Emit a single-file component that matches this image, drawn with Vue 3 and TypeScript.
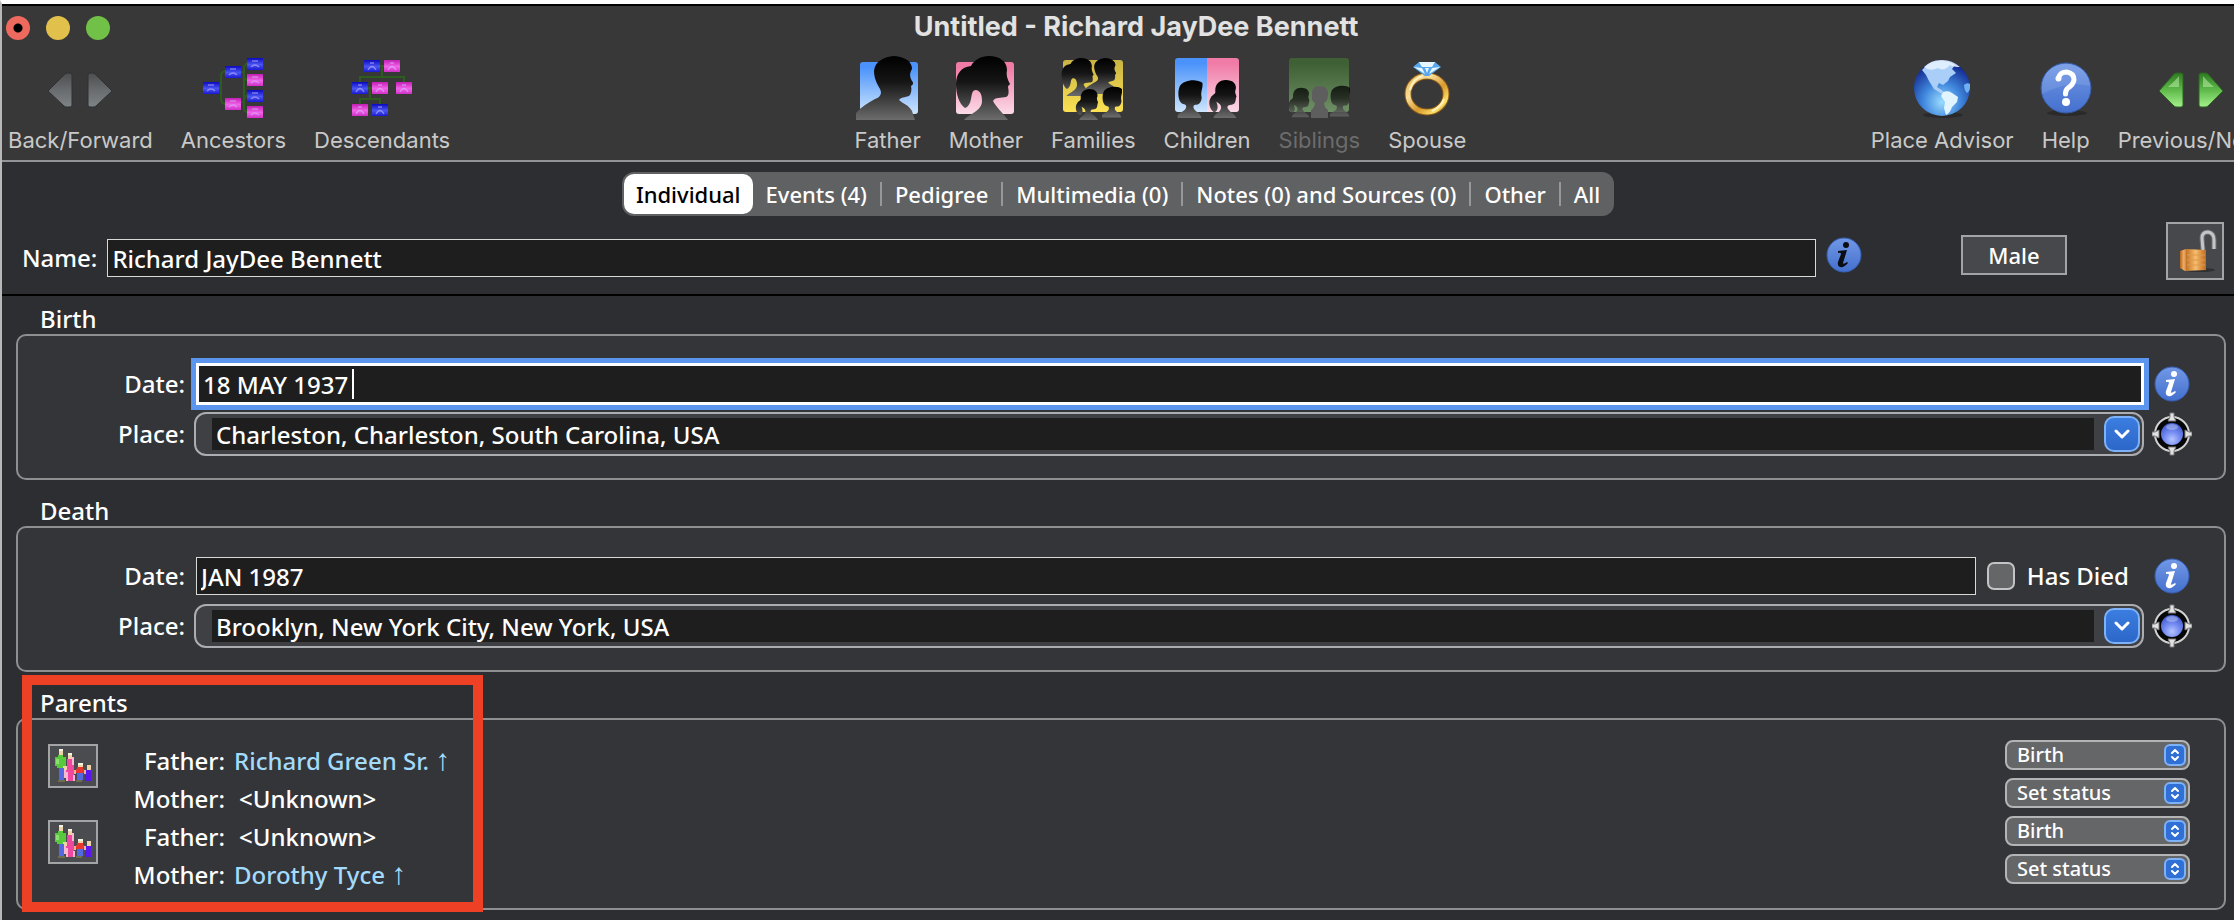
<script setup lang="ts">
import { ref } from 'vue'

interface Tool { id: string; label: string; disabled?: boolean }
interface Person { role: string; name: string; known: boolean; status: string }

const leftTools: Tool[] = [
  { id: 'history', label: 'Back/Forward' },
  { id: 'ancestors', label: 'Ancestors' },
  { id: 'descendants', label: 'Descendants' },
]
const familyTools: Tool[] = [
  { id: 'father', label: 'Father' },
  { id: 'mother', label: 'Mother' },
  { id: 'families', label: 'Families' },
  { id: 'children', label: 'Children' },
  { id: 'siblings', label: 'Siblings', disabled: true },
  { id: 'spouse', label: 'Spouse' },
]
const rightTools: Tool[] = [
  { id: 'globe', label: 'Place Advisor' },
  { id: 'help', label: 'Help' },
  { id: 'browse', label: 'Previous/Next' },
]
const groups = [leftTools, familyTools, rightTools]

const tabs = ['Individual', 'Events (4)', 'Pedigree', 'Multimedia (0)', 'Notes (0) and Sources (0)', 'Other', 'All']
const activeTab = ref('Individual')

const fullName = ref('Richard JayDee Bennett')
const hasDied = ref(false)
const events = ref([
  { id: 'birth', title: 'Birth', date: '18 MAY 1937', place: 'Charleston, Charleston, South Carolina, USA', focused: true },
  { id: 'death', title: 'Death', date: 'JAN 1987', place: 'Brooklyn, New York City, New York, USA', focused: false },
])
const families = ref<Person[][]>([
  [
    { role: 'Father', name: 'Richard Green Sr.', known: true, status: 'Birth' },
    { role: 'Mother', name: '<Unknown>', known: false, status: 'Set status' },
  ],
  [
    { role: 'Father', name: '<Unknown>', known: false, status: 'Birth' },
    { role: 'Mother', name: 'Dorothy Tyce', known: true, status: 'Set status' },
  ],
])

const ancestorNodes = [
  [0, 26, 'b'], [22, 10, 'b'], [22, 42, 'p'], [44, 2, 'b'], [44, 18, 'p'], [44, 34, 'b'], [44, 50, 'p'],
] as const
const descendantNodes = [
  [12, 4, 'b'], [32, 4, 'p'], [0, 26, 'b'], [20, 26, 'p'], [44, 26, 'p'], [0, 48, 'p'], [20, 48, 'b'],
] as const
</script>

<template>
  <div class="window">
    <svg class="sprite" aria-hidden="true">
      <defs>
        <linearGradient id="g-sil" x1="0" y1="0" x2="0" y2="1"><stop offset="0" stop-color="#000" /><stop offset="0.4" stop-color="#151515" /><stop offset="1" stop-color="#6c6c6c" /></linearGradient>
        <linearGradient id="g-sky" x1="0" y1="0" x2="0" y2="1"><stop offset="0.1" stop-color="#4b93fb" /><stop offset="1" stop-color="#cde5fd" /></linearGradient>
        <linearGradient id="g-rose" x1="0" y1="0" x2="0" y2="1"><stop offset="0.1" stop-color="#f07ba6" /><stop offset="1" stop-color="#fbdbe8" /></linearGradient>
        <linearGradient id="g-gold" x1="0" y1="0" x2="0" y2="1"><stop offset="0" stop-color="#c9b443" /><stop offset="1" stop-color="#fbe152" /></linearGradient>
        <linearGradient id="g-leaf" x1="0" y1="0" x2="0" y2="1"><stop offset="0.1" stop-color="#3f6034" /><stop offset="1" stop-color="#6f8f66" /></linearGradient>
        <linearGradient id="g-blue" x1="0" y1="0" x2="0" y2="1"><stop offset="0" stop-color="#0a0ac0" /><stop offset="0.55" stop-color="#4a55f2" /><stop offset="1" stop-color="#1a1ad2" /></linearGradient>
        <linearGradient id="g-pink" x1="0" y1="0" x2="0" y2="1"><stop offset="0" stop-color="#c41fb4" /><stop offset="0.55" stop-color="#f263ea" /><stop offset="1" stop-color="#cf2fc4" /></linearGradient>
        <linearGradient id="g-grey" x1="0" y1="0" x2="0" y2="1"><stop offset="0" stop-color="#4c4e50" /><stop offset="0.5" stop-color="#696c6f" /><stop offset="1" stop-color="#7e8386" /></linearGradient>
        <linearGradient id="g-green" x1="0" y1="0" x2="0" y2="1"><stop offset="0" stop-color="#2f7a22" /><stop offset="0.5" stop-color="#5fba4a" /><stop offset="1" stop-color="#a5f08c" /></linearGradient>
        <linearGradient id="g-info" x1="0" y1="0" x2="0" y2="1"><stop offset="0" stop-color="#7298e6" /><stop offset="1" stop-color="#4470cd" /></linearGradient>
        <radialGradient id="g-globe" cx="0.5" cy="0.75" r="0.75"><stop offset="0" stop-color="#9adcff" /><stop offset="0.45" stop-color="#3f86dc" /><stop offset="1" stop-color="#0c1c86" /></radialGradient>
        <radialGradient id="g-orb" cx="0.5" cy="0.75" r="0.75"><stop offset="0" stop-color="#b6c4ff" /><stop offset="0.5" stop-color="#7088f0" /><stop offset="1" stop-color="#3f58c8" /></radialGradient>
        <linearGradient id="g-ring" x1="0" y1="0" x2="1" y2="1"><stop offset="0" stop-color="#e8b95a" /><stop offset="0.3" stop-color="#f8dd98" /><stop offset="0.6" stop-color="#d89a2c" /><stop offset="0.85" stop-color="#fbe06a" /><stop offset="1" stop-color="#a86a18" /></linearGradient>
        <linearGradient id="g-lock" x1="0" y1="0" x2="1" y2="0"><stop offset="0" stop-color="#b5651c" /><stop offset="0.15" stop-color="#f0b06a" /><stop offset="0.25" stop-color="#c4762a" /><stop offset="0.6" stop-color="#f7bd6c" /><stop offset="1" stop-color="#c06a1e" /></linearGradient>
        <symbol id="man" viewBox="0 0 64 64">
          <path fill="url(#g-sil)" d="M0 64V57C5 51 12 47 19 43C25 41 26 37 24 33C21 28 18 22 18 15C19 5 28 1 38 0C50 1 56 6 56 13C53 18 54 21 56 25C58 27 57 29 55 30C56 34 55 37 54 39C51 42 46 40 43 44C47 48 52 48 56 55L59 64Z" />
        </symbol>
        <symbol id="woman" viewBox="0 0 64 64">
          <path fill="url(#g-sil)" d="M9 64C14 58 27 55 27 45C27 40 26 35 21 34C17 34 17 38 16 43C15 48 13 51 10 52C4 48 1 38 1 28C1 18 6 11 16 10C19 4 26 0 34 0C44 0 52 5 52 14C51 18 52 23 55 28C55 29 53 29 53 31C54 36 54 40 51 41C46 42 40 41 38 45C41 51 48 57 53 64Z" />
        </symbol>
        <symbol id="boy" viewBox="0 0 26 40">
          <path fill="url(#g-sil)" d="M0 40V37C3 33 9 33 9 28C9 26 8 26 5 25C0 22 0 12 2 7C5 0 20-2 26 3C27 8 24 12 25 17C26 20 24 26 20 26C17 26 16 27 17 30C19 34 24 34 25 40Z" />
        </symbol>
        <symbol id="girl" viewBox="0 0 30 40">
          <path fill="url(#g-sil)" d="M5 40C6 35 13 34 13 29C13 26 11 25 8 23C10 28 10 32 6 34C1 32-1 23 2 19C3 16 6 16 7 13C6 6 10 0 18 0C27 0 30 6 28 11C27 14 30 17 29 18C28 20 29 26 24 26C20 26 19 28 20 30C22 34 28 36 29 40Z" />
        </symbol>
      </defs>
    </svg>

    <header class="chrome">
      <div class="titlebar">
        <div class="lights">
          <button class="light close" type="button" aria-label="Close"></button>
          <button class="light minimize" type="button" aria-label="Minimize"></button>
          <button class="light zoom" type="button" aria-label="Zoom"></button>
        </div>
        <h1>Untitled - Richard JayDee Bennett</h1>
      </div>

      <nav class="toolbar" aria-label="Toolbar">
        <div v-for="(group, g) in groups" :key="g" class="tool-group">
          <button v-for="tool in group" :key="tool.id" type="button" class="tool" :disabled="tool.disabled">
            <svg class="tool-icon" width="64" height="64" viewBox="0 0 64 64" aria-hidden="true">
              <g v-if="tool.id === 'history'" fill="url(#g-grey)" stroke="#303132" stroke-width="1">
                <path d="M0 35L17 18Q18 17 20 17H22Q24 17 24 19V49Q24 51 22 51H19Q17 51 16 50Z" />
                <path d="M64 35L47 18Q46 17 44 17H42Q40 17 40 19V49Q40 51 42 51H45Q47 51 48 50Z" />
              </g>
              <g v-else-if="tool.id === 'browse'" fill="url(#g-green)" stroke="#2c6322" stroke-width="1">
                <path d="M0 35L15 18Q16 17 18 17H22Q24 17 24 19V49Q24 51 22 51H18Q16 51 15 50Z" />
                <path d="M64 35L49 18Q48 17 46 17H42Q40 17 40 19V49Q40 51 42 51H46Q48 51 49 50Z" />
                <path stroke="none" fill="#c3f7b0" opacity="0.5" d="M9 31Q17 24 20 20V31ZM55 31Q47 24 44 20V31Z" />
              </g>
              <g v-else-if="tool.id === 'ancestors'" transform="translate(2 0)">
                <path fill="none" stroke="#2c5c1e" stroke-width="2" d="M22 15Q18 16 18 20V43Q18 47 22 48M16 32H19M44 7Q41 9 41 14V20Q41 23 44 24M44 39Q41 41 41 46V52Q41 55 44 56M38 16H41V46H38" />
                <g v-for="(n, i) in ancestorNodes" :key="i" :transform="`translate(${n[0]} ${n[1]})`">
                  <rect width="16" height="12" :fill="n[2] === 'b' ? 'url(#g-blue)' : 'url(#g-pink)'" />
                  <path fill="none" stroke="#cfc4ff" stroke-opacity="0.5" stroke-width="1.5" d="M5 3H11M4 9Q8 5 12 9" />
                </g>
              </g>
              <g v-else-if="tool.id === 'descendants'" transform="translate(2 0)">
                <path fill="none" stroke="#2c5c1e" stroke-width="2" d="M28 10H32M30 10V21M8 26V21H52V26M16 32H20M18 32V43M8 48V43H28V48" />
                <g v-for="(n, i) in descendantNodes" :key="i" :transform="`translate(${n[0]} ${n[1]})`">
                  <rect width="16" height="12" :fill="n[2] === 'b' ? 'url(#g-blue)' : 'url(#g-pink)'" />
                  <path fill="none" stroke="#d8ccff" stroke-opacity="0.5" stroke-width="1.5" d="M6 3H10M4 10Q8 3 12 10" />
                </g>
              </g>
              <g v-else-if="tool.id === 'father'">
                <rect x="4" y="6" width="58" height="52" rx="3" fill="url(#g-sky)" />
                <use href="#man" width="64" height="64" />
              </g>
              <g v-else-if="tool.id === 'mother'">
                <rect x="2" y="6" width="58" height="52" rx="3" fill="url(#g-rose)" />
                <use href="#woman" x="1" width="64" height="64" />
              </g>
              <g v-else-if="tool.id === 'families'">
                <rect x="2" y="4" width="60" height="52" rx="3" fill="url(#g-gold)" />
                <use href="#woman" x="0" y="2" width="38" height="38" />
                <use href="#man" x="23" y="2" width="36" height="36" />
                <use href="#girl" x="14" y="33" width="24" height="31" />
                <use href="#boy" x="41" y="30" width="20" height="32" />
              </g>
              <g v-else-if="tool.id === 'children'">
                <path fill="url(#g-sky)" d="M3 2H32V56H3Q0 56 0 53V5Q0 2 3 2Z" />
                <path fill="url(#g-rose)" d="M32 2H61Q64 2 64 5V53Q64 56 61 56H32Z" />
                <use href="#boy" x="2" y="24" width="26" height="38" />
                <use href="#girl" x="33" y="24" width="30" height="38" />
              </g>
              <g v-else-if="tool.id === 'siblings'">
                <rect x="2" y="2" width="60" height="54" rx="3" fill="url(#g-leaf)" />
                <g opacity="0.75">
                  <use href="#girl" x="1" y="31" width="22" height="31" />
                  <use href="#boy" x="43" y="28" width="20" height="34" />
                </g>
                <path fill="#5e5e5e" d="M24 62V54Q28 51 28 47Q24 45 25 39Q24 30 33 30Q41 30 41 38Q41 45 37 47Q37 51 41 54V62Z" />
              </g>
              <g v-else-if="tool.id === 'spouse'">
                <ellipse cx="32" cy="38" rx="19" ry="18" fill="none" stroke="#8f5c18" stroke-width="7" />
                <ellipse cx="32" cy="38" rx="19" ry="18" fill="none" stroke="url(#g-ring)" stroke-width="5" />
                <path fill="none" stroke="#fff2c0" stroke-width="2" d="M15 34Q18 22 28 20M37 55Q46 51 49 43" />
                <path fill="#58a7ee" d="M24 6H40L46 11L34 20H30L18 11Z" />
                <path fill="#e8f7ff" d="M24 6H40L37 11H27ZM19 11L27 12L30 18ZM45 11L37 12L34 18ZM30 12H34L32 17Z" />
              </g>
              <g v-else-if="tool.id === 'globe'">
                <ellipse cx="33" cy="59" rx="20" ry="3" fill="#2a2a2a" />
                <circle cx="32" cy="32" r="28" fill="url(#g-globe)" />
                <path fill="#a9cff8" d="M12 14Q20 4 32 5Q40 5 45 9L42 13L46 17L40 21L38 25L33 29L29 27L27 31L33 35L32 38L24 33L19 25L16 19Z" />
                <path fill="#e9f3ff" opacity="0.85" d="M14 11Q22 3 33 4Q42 4 50 11Q43 11 40 9Q34 16 28 12Q20 16 14 11Z" />
                <path fill="#e2f5ff" d="M33 36Q39 34 42 37L48 41L47 46L42 51Q40 57 36 59L34 52L35 46L31 40Z" />
                <path fill="#6fb0f4" d="M60 28Q57 26 54 29Q54 34 57 37Q60 35 60 31Z" />
              </g>
              <g v-else>
                <ellipse cx="33" cy="57" rx="20" ry="3" fill="#2a2a2a" />
                <circle cx="32" cy="32" r="25" fill="url(#g-info)" stroke="#365ba8" stroke-width="1" />
                <path fill="#fff" fill-opacity="0.1" d="M8 38Q6 10 32 8Q54 10 56 30Q34 24 8 38Z" />
                <path fill="none" stroke="#fff" stroke-width="5" stroke-linecap="round" d="M24.500 22Q26 16 32.500 16Q40 17 40 24Q39 29 34 32Q31.500 34 31.500 38" />
                <circle cx="24.500" cy="22.500" r="3" fill="#fff" />
                <circle cx="32" cy="46" r="4" fill="#fff" />
              </g>
            </svg>
            <span>{{ tool.label }}</span>
          </button>
        </div>
      </nav>
    </header>

    <main>
      <div class="tabs" role="tablist">
        <button
          v-for="tab in tabs" :key="tab" type="button" role="tab" class="tab"
          :class="{ active: tab === activeTab }" :aria-selected="tab === activeTab" @click="activeTab = tab"
        >{{ tab }}</button>
      </div>

      <div class="name-row">
        <label for="full-name">Name:</label>
        <input id="full-name" v-model="fullName" class="text-field" type="text" />
        <button class="icon-button" type="button" aria-label="Name information">
          <svg width="36" height="36" viewBox="0 0 36 36"><circle cx="18" cy="18" r="17" fill="url(#g-info)" stroke="#3560b8" /><g fill="#0b0d14"><circle cx="20" cy="8" r="3" /><path d="M12 14L21 13L17 26Q17 28 21 25L22 26Q18 31 14 30Q11 29 12 25L15 17Q15 15 12 16Z" /></g></svg>
        </button>
        <button class="sex-button" type="button">Male</button>
        <button class="lock-button" type="button" aria-label="Unlock record">
          <svg width="54" height="54" viewBox="0 0 54 54">
            <ellipse cx="32" cy="46" rx="15" ry="2" fill="#2f3032" />
            <path fill="none" stroke="#6d6e70" stroke-width="5" d="M35 27L34 14Q34 8 40 8Q46 9 46 16V25" />
            <path fill="none" stroke="#c4c5c7" stroke-width="3" d="M35 26L34 14Q34 8 40 8Q46 9 46 16V25" />
            <path fill="url(#g-lock)" d="M12 27L18 25L38 26V46L17 47L12 44Z" />
            <path stroke="#dc9a50" stroke-width="1" d="M19 31H37M19 36H37M19 41H37" />
          </svg>
        </button>
      </div>

      <div class="sections">
        <section v-for="event in events" :key="event.id" :aria-labelledby="event.id + '-title'">
          <h2 :id="event.id + '-title'">{{ event.title }}</h2>
          <div class="box event-box">
            <div class="field-row">
              <label :for="event.id + '-date'">Date:</label>
              <div class="date-cell">
                <input
                  :id="event.id + '-date'" v-model="event.date" class="text-field"
                  :class="{ focused: event.focused }" type="text"
                />
                <span v-if="event.focused" class="caret"></span>
                <label v-if="event.id === 'death'" class="died">
                  <input v-model="hasDied" type="checkbox" />Has Died
                </label>
              </div>
              <button class="icon-button" type="button" :aria-label="event.title + ' information'">
                <svg width="36" height="36" viewBox="0 0 36 36"><circle cx="18" cy="18" r="17" fill="url(#g-info)" stroke="#3560b8" /><g fill="#fff"><circle cx="20" cy="8" r="3" /><path d="M12 14L21 13L17 26Q17 28 21 25L22 26Q18 31 14 30Q11 29 12 25L15 17Q15 15 12 16Z" /></g></svg>
              </button>
            </div>
            <div class="field-row">
              <label :for="event.id + '-place'">Place:</label>
              <div class="combo">
                <input :id="event.id + '-place'" v-model="event.place" type="text" />
                <button class="combo-arrow" type="button" aria-label="Show places">
                  <svg width="16" height="12" viewBox="0 0 16 12"><path d="M2 3L8 9L14 3" fill="none" stroke="#fff" stroke-width="3" stroke-linecap="round" stroke-linejoin="round" /></svg>
                </button>
              </div>
              <button class="icon-button" type="button" aria-label="Locate place">
                <svg width="40" height="44" viewBox="0 0 40 44">
                  <circle cx="20" cy="22" r="17" fill="#060606" stroke="#d2d2d2" stroke-width="2" />
                  <circle cx="20" cy="22" r="11" fill="url(#g-orb)" />
                  <ellipse cx="20" cy="15" rx="6" ry="3" fill="#fff" opacity="0.3" />
                  <g fill="#e2e2e2" stroke="#7a7a7a" stroke-width="1"><path d="M18 1H22V5L24 9H16L18 5Z" /><path d="M18 43H22V39L24 35H16L18 39Z" /><path d="M0 20V24H3L7 26V18L3 20Z" /><path d="M40 20V24H37L33 26V18L37 20Z" /></g>
                </svg>
              </button>
            </div>
          </div>
        </section>

        <section class="parents" aria-labelledby="parents-title">
          <h2 id="parents-title">Parents</h2>
          <div class="box parents-box">
            <div v-for="(family, f) in families" :key="f" class="family">
              <button class="family-button" type="button" aria-label="Open family">
                <svg width="38" height="36" viewBox="0 0 38 36" shape-rendering="crispEdges">
                  <path fill="#efd3a8" d="M5 1H9V8H5ZM14 5H18V12H14ZM24 15H29V20H24ZM33 17H37V22H33ZM9 18H14V24H9Z" />
                  <path fill="#f4f4e4" d="M5 1H9V3H5ZM14 5H18V7H14ZM24 15H29V17H24Z" />
                  <path fill="#58c83e" d="M4 7H9V9H12V18H9V20H3V18H1V9H4Z" />
                  <path fill="#8be070" d="M2 11H5V16H2Z" />
                  <path fill="#5468e0" d="M5 20H10V32H5ZM23 24H29V32H23Z" />
                  <path fill="#f048a0" d="M13 11H18V16H20V28H19V33H12V22H13Z" />
                  <path fill="#f7b9d2" d="M18 9H20V17H18ZM12 24H14V33H12ZM10 22H12V30H10ZM19 27H21V33H19Z" />
                  <path fill="#e8372e" d="M23 19H29V21H30V25H22V21H23Z" />
                  <path fill="#f3b09c" d="M20 22H22V26H20ZM30 22H32V26H30Z" />
                  <path fill="#5b17f0" d="M32 22H37V33H31V27H32Z" />
                  <path fill="#6d6e4a" d="M4 32H11V34H4ZM22 32H28V34H22Z" />
                </svg>
              </button>
              <dl class="people">
                <div v-for="person in family" :key="person.role">
                  <dt>{{ person.role }}:</dt>
                  <dd><a v-if="person.known" href="#">{{ person.name }} <span class="arrow">↑</span></a><span v-else class="unknown">{{ person.name }}</span></dd>
                </div>
              </dl>
              <div class="statuses">
                <div v-for="person in family" :key="person.role" class="status">
                  <select v-model="person.status" :aria-label="person.role + ' status'">
                    <option>Birth</option>
                    <option>Set status</option>
                  </select>
                  <svg class="stepper" width="22" height="22" viewBox="0 0 22 22" aria-hidden="true">
                    <rect x="1" y="1" width="20" height="20" rx="5" fill="#2f6fd6" stroke="#7eb2f8" stroke-width="2" />
                    <path d="M8 9L11 6L14 9M8 13L11 16L14 13" fill="none" stroke="#fff" stroke-width="2" stroke-linecap="round" stroke-linejoin="round" />
                  </svg>
                </div>
              </div>
            </div>
          </div>
          <div class="highlight" aria-hidden="true"></div>
        </section>
      </div>
    </main>
  </div>
</template>

<style>
body {
  background: #2d2e31;
}
</style>

<style scoped>
.window {
  box-sizing: border-box;
  min-height: 100vh;
  overflow: hidden;
  border-top: 4px solid #fcfcfc;
  border-left: 2px solid #b8b8b8;
  background: #2d2e31;
  color: #fff;
  font: 500 24px/30px "Noto Sans", sans-serif;
}
.sprite {
  position: absolute;
  width: 0;
  height: 0;
}
button,
input,
select {
  box-sizing: border-box;
  margin: 0;
  color: inherit;
  font: inherit;
}
button {
  padding: 0;
  border: 0;
  background: none;
}
svg {
  display: block;
  flex: none;
}
.chrome {
  border-top: 2px solid #000;
  border-bottom: 2px solid #929397;
  background: #383838;
  font-family: Inter, sans-serif;
}
.titlebar {
  display: grid;
  grid-template-columns: 1fr auto 1fr;
  align-items: center;
  height: 44px;
  padding: 0 4px;
}
.lights {
  display: flex;
  gap: 16px;
}
.light {
  width: 24px;
  height: 24px;
  border-radius: 50%;
}
.close {
  background: radial-gradient(circle, #000 4px, #ee695e 5px);
}
.minimize {
  background: #e1c04c;
}
.zoom {
  background: #71c047;
}
h1 {
  margin: 0;
  padding: 0 0 2px 36px;
  color: #e2e2e2;
  font-size: 27px;
  font-weight: 700;
}
.toolbar {
  display: flex;
  justify-content: space-between;
  margin-right: -30px;
  padding: 6px 0 7px 6px;
}
.tool-group {
  display: flex;
  gap: 28px;
}
.tool {
  display: flex;
  flex-direction: column;
  align-items: center;
  gap: 7px;
  color: #c9c9c9;
  font-size: 22px;
  font-weight: 400;
  line-height: 26px;
  white-space: nowrap;
}
.tool:disabled {
  color: #6c6c6c;
}
.tool-icon {
  margin: 0 -8px;
}
.tabs {
  display: flex;
  width: fit-content;
  height: 44px;
  margin: 10px auto 0;
  padding: 2px;
  box-sizing: border-box;
  border-radius: 12px;
  background: #606163;
}
.tab {
  display: flex;
  align-items: center;
  padding-left: 13px;
  font-size: 22px;
  white-space: nowrap;
}
.tab::after {
  width: 2px;
  height: 24px;
  margin-left: 13px;
  background: #97989a;
  content: "";
}
.tab:last-child::after,
.tab.active::after {
  display: none;
}
.tab:last-child {
  padding-right: 12px;
}
.tab.active {
  padding: 0 12px;
  border-radius: 10px;
  background: #fff;
  color: #000;
}
.name-row {
  display: flex;
  align-items: center;
  height: 72px;
  margin-top: 6px;
  padding: 0 10px 0 20px;
  border-bottom: 2px solid #000;
}
.name-row > button {
  margin-bottom: 6px;
}
.text-field {
  flex: 1;
  min-width: 0;
  height: 38px;
  padding: 0 4px;
  border: 1px solid #d6d9d6;
  border-radius: 0;
  outline: none;
  background: #1e1e1e;
}
.name-row .text-field {
  margin: 0 10px;
}
.sex-button {
  width: 106px;
  height: 40px;
  margin: 0 99px;
  border: 2px solid #a3a4a6;
  background: #47484b;
  font-size: 22px;
}
.lock-button {
  align-self: flex-start;
  border: 2px solid #a3a4a6;
  background: #47484b;
}
.sections {
  display: flex;
  flex-direction: column;
  gap: 16px;
  padding: 8px 8px 10px 14px;
}
h2 {
  margin: 0;
  padding-left: 24px;
  font-size: 24px;
  font-weight: 500;
}
.box {
  border: 2px solid #8e8f91;
  border-radius: 10px;
  background: #343538;
}
.event-box {
  display: flex;
  flex-direction: column;
  gap: 6px;
  padding: 26px 32px 22px 0;
}
.field-row {
  display: grid;
  grid-template-columns: 167px 1fr 48px;
  align-items: center;
  height: 44px;
}
.field-row > label {
  text-align: right;
}
.field-row > .icon-button {
  justify-self: end;
  display: flex;
  justify-content: center;
  width: 40px;
}
.date-cell {
  position: relative;
  display: flex;
  align-items: center;
  margin-left: 11px;
}
.text-field.focused {
  height: 42px;
  padding: 0 4px;
  border: 3px solid #fff;
  box-shadow: 0 0 0 5px #5b95ee;
}
.caret {
  position: absolute;
  top: 6px;
  left: 156px;
  width: 2px;
  height: 30px;
  background: #fff;
}
.died {
  display: flex;
  align-items: center;
  gap: 12px;
  margin: 0 15px 0 11px;
}
.died input {
  width: 28px;
  height: 28px;
  border: 2px solid #c3c4c5;
  border-radius: 7px;
  background: #656668;
  appearance: none;
}
.died input:checked {
  background: #2f6fd6;
}
.combo {
  display: flex;
  align-items: center;
  gap: 10px;
  box-sizing: border-box;
  height: 44px;
  margin-left: 9px;
  padding: 0 2px 0 16px;
  border: 2px solid #acadb0;
  border-radius: 12px;
  background: #3f4044;
}
.combo input {
  flex: 1;
  min-width: 0;
  height: 32px;
  padding: 0 4px;
  border: 0;
  outline: none;
  background: #1e1e1e;
}
.combo-arrow {
  display: flex;
  align-items: center;
  justify-content: center;
  width: 36px;
  height: 36px;
  border: 2px solid #7eb2f8;
  border-radius: 10px;
  background: linear-gradient(#3b7de0, #2c67c9);
}
.parents {
  position: relative;
}
.parents-box {
  padding: 20px 34px 16px 30px;
}
.family {
  display: flex;
  align-items: flex-start;
  height: 76px;
}
.family-button {
  display: flex;
  align-items: center;
  justify-content: center;
  width: 50px;
  height: 44px;
  margin-top: 4px;
  border: 2px solid #a3a4a6;
  background: #4b4c4f;
}
.people {
  flex: 1;
  margin: 0;
  padding-top: 2px;
}
.people > div {
  display: flex;
  gap: 9px;
  height: 38px;
  line-height: 38px;
}
dt {
  width: 127px;
  text-align: right;
}
dd {
  margin: 0;
}
.unknown {
  padding-left: 5px;
}
a {
  color: #a3dbfd;
  text-decoration: none;
}
.arrow {
  font-family: "Liberation Sans", sans-serif;
  font-size: 30px;
  line-height: 1;
}
.statuses {
  display: flex;
  flex-direction: column;
  gap: 8px;
}
.status {
  position: relative;
  width: 185px;
}
.status select {
  display: block;
  width: 100%;
  height: 30px;
  padding: 0 30px 0 10px;
  border: 2px solid #b3b4b5;
  border-radius: 8px;
  background: #656668;
  font-size: 20px;
  line-height: 26px;
  appearance: none;
}
.stepper {
  position: absolute;
  top: 4px;
  right: 4px;
  pointer-events: none;
}
.highlight {
  position: absolute;
  top: -13px;
  bottom: -2px;
  left: 6px;
  box-sizing: border-box;
  width: 461px;
  border: 10px solid #ed4024;
  pointer-events: none;
}
</style>
